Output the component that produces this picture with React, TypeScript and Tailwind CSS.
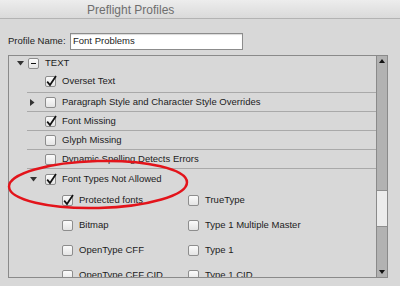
import type { ReactNode } from "react";

const FONT = { fontFamily: '"Liberation Sans", Arial, sans-serif' };

function Box({ checked, minus }: { checked?: boolean; minus?: boolean }) {
  return (
    <span className="relative block h-[11px] w-[11px] shrink-0 rounded-[2px] border border-[#8d8d8d] bg-gradient-to-b from-[#fbfbfb] to-[#e4e4e4]">
      {minus && <span className="absolute left-[2px] top-[4px] h-[1.5px] w-[5px] bg-[#111]" />}
      {checked && (
        <svg className="absolute -left-px -top-[3px]" width="13" height="14" viewBox="0 0 13 14">
          <path d="M2.2 7.6 L5 11 L11 2" fill="none" stroke="#111" strokeWidth="1.7" />
        </svg>
      )}
    </span>
  );
}

function Down() {
  return (
    <svg width="7" height="5" viewBox="0 0 7 5">
      <path d="M0 0 H7 L3.5 4.5 Z" fill="#333" />
    </svg>
  );
}

function Right() {
  return (
    <svg width="5" height="7" viewBox="0 0 5 7">
      <path d="M0 0 V7 L4.5 3.5 Z" fill="#333" />
    </svg>
  );
}

function Row({
  lead,
  checked,
  label,
  sep = true,
  className = "",
}: {
  lead?: ReactNode;
  checked?: boolean;
  label: string;
  sep?: boolean;
  className?: string;
}) {
  return (
    <div className={`ml-[18px] flex items-center ${sep ? "border-b border-[#a9a9a9]" : ""} ${className}`}>
      <span className="flex w-[18px] items-center pl-[3px]">{lead}</span>
      <Box checked={checked} />
      <span className="ml-[6px] whitespace-nowrap">{label}</span>
    </div>
  );
}

const subs: [string, boolean, string][] = [
  ["Protected fonts", true, "TrueType"],
  ["Bitmap", false, "Type 1 Multiple Master"],
  ["OpenType CFF", false, "Type 1"],
  ["OpenType CFF CID", false, "Type 1 CID"],
];

export default function App() {
  return (
    <div className="relative h-[286px] w-[400px] overflow-hidden bg-[#d8d8d8] text-[9.5px] text-[#1c1c1c]" style={FONT}>
      <div className="h-[19px] border-b border-[#b3b3b3] bg-gradient-to-b from-[#ededed] to-[#dadada] pl-[87px] pt-[2px] text-[12px] leading-[16px] text-[#6e6e6e]">
        Preflight Profiles
      </div>

      <div className="mt-[14px] flex items-center pl-[8px]">
        <span className="w-[62px] whitespace-nowrap">Profile Name:</span>
        <div className="flex h-[17px] w-[173px] items-center border border-[#8c8c8c] bg-white pl-[2px] shadow-[inset_0_1px_1px_rgba(0,0,0,0.15)]">
          Font Problems
        </div>
      </div>

      <div className="ml-[8px] mt-[5px] flex h-[223px] w-[380px] border border-[#8a8a8a]">
        <div className="flex-1 overflow-hidden">
          <div className="flex h-[14px] items-center pl-[8px]">
            <Down />
            <span className="ml-[4px]">
              <Box minus />
            </span>
            <span className="ml-[6px]">TEXT</span>
          </div>
          <Row checked label="Overset Text" className="h-[23px] pt-[1px]" />
          <Row lead={<Right />} label="Paragraph Style and Character Style Overrides" className="h-[19px]" />
          <Row checked label="Font Missing" className="h-[19px]" />
          <Row label="Glyph Missing" className="h-[19px]" />
          <Row label="Dynamic Spelling Detects Errors" className="h-[19px]" />
          <Row lead={<Down />} checked label="Font Types Not Allowed" sep={false} className="h-[19px] pt-[1px]" />
          <div className="grid grid-cols-[126px_1fr] pl-[53px]">
            {subs.map(([a, on, b]) => (
              <div key={a} className="contents">
                <div className="flex h-[25px] items-center">
                  <Box checked={on} />
                  <span className="ml-[6px] whitespace-nowrap">{a}</span>
                </div>
                <div className="flex h-[25px] items-center">
                  <Box />
                  <span className="ml-[6px] whitespace-nowrap">{b}</span>
                </div>
              </div>
            ))}
          </div>
        </div>

        <div className="flex w-[11px] flex-col border-l border-[#8a8a8a] bg-[#b2b2b2]">
          <div className="flex h-[134px] justify-center pt-[3px]">
            <svg width="6" height="4" viewBox="0 0 6 4">
              <path d="M3 0 L6 4 H0 Z" fill="#111" />
            </svg>
          </div>
          <div className="h-[37px] border-y border-[#8e8e8e] bg-[#ececec]" />
          <div className="flex flex-1 items-end justify-center pb-[3px]">
            <svg width="6" height="4" viewBox="0 0 6 4">
              <path d="M0 0 H6 L3 4 Z" fill="#111" />
            </svg>
          </div>
        </div>
      </div>

      <svg className="pointer-events-none absolute left-0 top-0" width="400" height="286">
        <ellipse
          cx="98"
          cy="184.5"
          rx="89"
          ry="23.5"
          transform="rotate(-1.5 98 184.5)"
          fill="none"
          stroke="#e3141b"
          strokeWidth="2.5"
        />
      </svg>
    </div>
  );
}
